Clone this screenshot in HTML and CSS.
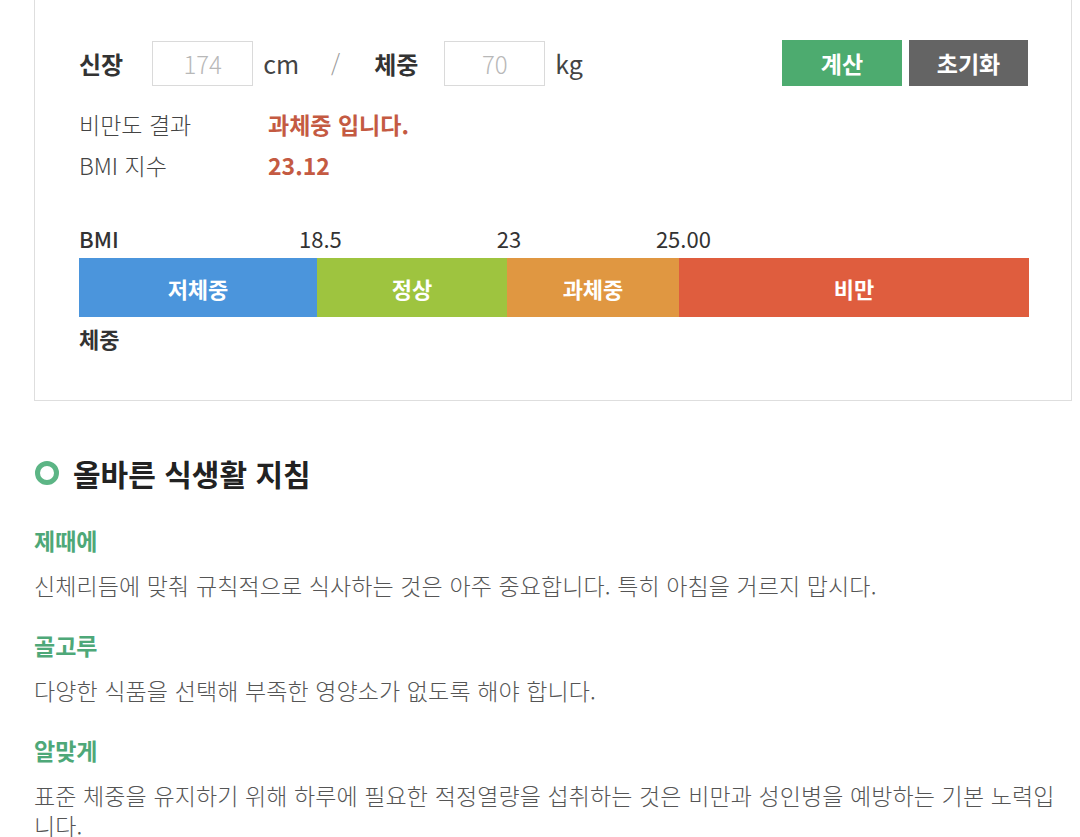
FILE: index.html
```html
<!doctype html>
<html lang="ko">

<head>
  <meta charset="utf-8">
  <title>BMI 계산기</title>
  <link rel="stylesheet" href="styles.css">
</head>

<body>

  <div id="page">
    <div class="calc">

      <div class="calc-form">
        <label class="field">
          <span class="field__name">신장</span>
          <input class="field__input" type="text" value="174">
          <span class="field__unit">cm</span>
        </label>
        <span class="slash">/</span>
        <label class="field">
          <span class="field__name field__name--weight">체중</span>
          <input class="field__input" type="text" value="70">
          <span class="field__unit">kg</span>
        </label>
        <div class="buttons">
          <button class="btn btn-calc" type="button">계산</button>
          <button class="btn btn-reset" type="button">초기화</button>
        </div>
      </div>

      <dl class="result">
        <dt>비만도 결과</dt>
        <dd>과체중 입니다.</dd>
        <dt>BMI 지수</dt>
        <dd>23.12</dd>
      </dl>

      <div class="scale">
        <div class="scale__marks">
          <div class="scale__col scale__col--low"><span class="scale__name">BMI</span></div>
          <div class="scale__col scale__col--normal"><span class="scale__mark">18.5</span></div>
          <div class="scale__col scale__col--over"><span class="scale__mark">23</span></div>
          <div class="scale__col scale__col--obese"><span class="scale__mark">25.00</span></div>
        </div>
        <div class="scale__bar">
          <div class="scale__col scale__col--low">저체중</div>
          <div class="scale__col scale__col--normal">정상</div>
          <div class="scale__col scale__col--over">과체중</div>
          <div class="scale__col scale__col--obese">비만</div>
        </div>
        <div class="scale__weight">체중</div>
      </div>

    </div>

    <div class="guide">
      <h2 class="guide__title">
        <svg class="guide__icon" xmlns="http://www.w3.org/2000/svg" width="24" height="24" viewBox="0 0 24 24">
          <circle cx="12" cy="12" r="9.5" fill="none" stroke="#5cb585" stroke-width="5"/>
        </svg>
        올바른 식생활 지침
      </h2>

      <h3 class="guide__head">제때에</h3>
      <p class="guide__text">신체리듬에 맞춰 규칙적으로 식사하는 것은 아주 중요합니다. 특히 아침을 거르지 맙시다.</p>

      <h3 class="guide__head">골고루</h3>
      <p class="guide__text">다양한 식품을 선택해 부족한 영양소가 없도록 해야 합니다.</p>

      <h3 class="guide__head">알맞게</h3>
      <p class="guide__text">표준 체중을 유지하기 위해 하루에 필요한 적정열량을 섭취하는 것은 비만과 성인병을 예방하는 기본 노력입니다.</p>
    </div>
  </div>

</body>

</html>
```

FILE: styles.css
```css
* {
  margin: 0;
  padding: 0;
  box-sizing: border-box;
}

body {
  font-family: "Noto Sans CJK KR", "Noto Sans", sans-serif;
  color: #444;
  background: #fff;
  overflow: hidden;
}

#page {
  width: 1080px;
  padding: 0 8px 0 34px;
}

/* calculator box */

.calc {
  border: 1px solid #dedede;
  border-top: 0;
  padding: 40px 43px 50px 44px;
}

.calc-form {
  display: flex;
  align-items: center;
  height: 46px;
}

.field {
  display: flex;
  align-items: center;
}

.field__name {
  font-size: 24px;
  font-weight: 700;
  color: #333;
  margin-right: 29px;
}

.field__name--weight {
  margin-right: 26px;
}

.field__input {
  width: 101px;
  height: 45px;
  border: 1px solid #dadada;
  font-family: inherit;
  font-size: 24px;
  font-weight: 300;
  color: #b8b8b8;
  text-align: center;
  outline: none;
}

.field__unit {
  font-size: 25px;
  font-weight: 400;
  color: #444;
  margin-left: 10px;
}

.slash {
  font-size: 23px;
  font-weight: 300;
  color: #999;
  margin: 0 34px 0 32px;
}

.buttons {
  margin-left: auto;
  display: flex;
  gap: 7px;
}

.btn {
  width: 120px;
  height: 46px;
  border: 0;
  font-family: inherit;
  font-size: 23px;
  font-weight: 700;
  color: #fff;
  cursor: pointer;
}

.btn-calc {
  background: #4dab6f;
}

.btn-reset {
  width: 119px;
  background: #646464;
}

.result {
  display: grid;
  grid-template-columns: 189px auto;
  margin-top: 18px;
  font-size: 23px;
  line-height: 41px;
}

.result dt {
  font-weight: 300;
  color: #444;
}

.result dd {
  font-weight: 700;
  color: #c45a42;
}

/* bmi scale */

.scale {
  margin-top: 40px;
}

.scale__marks,
.scale__bar {
  display: flex;
  width: 950px;
}

.scale__col--low {
  width: 238px;
}

.scale__col--normal {
  width: 190px;
}

.scale__col--over {
  width: 172px;
}

.scale__col--obese {
  flex: 1;
}

.scale__marks {
  font-size: 22px;
  line-height: 24px;
  color: #333;
}

.scale__name {
  font-weight: 500;
}

.scale__mark {
  display: inline-block;
  transform: translateX(-42%);
}

.scale__bar {
  margin-top: 8px;
  height: 59px;
}

.scale__bar .scale__col {
  display: flex;
  align-items: center;
  justify-content: center;
  font-size: 22px;
  font-weight: 700;
  color: #fff;
}

.scale__bar .scale__col--low {
  background: #4b95dc;
}

.scale__bar .scale__col--normal {
  background: #9ec43f;
}

.scale__bar .scale__col--over {
  background: #e09741;
}

.scale__bar .scale__col--obese {
  background: #df5d3e;
}

.scale__weight {
  margin-top: 9px;
  font-size: 22px;
  font-weight: 700;
  line-height: 24px;
  color: #333;
}

/* guide */

.guide {
  padding-top: 52px;
}

.guide__title {
  display: flex;
  align-items: center;
  gap: 14px;
  font-size: 30px;
  font-weight: 700;
  line-height: 40px;
  color: #222;
}

.guide__icon {
  flex: none;
  margin-left: 1px;
}

.guide__head {
  margin-top: 32px;
  font-size: 23px;
  font-weight: 700;
  line-height: 30px;
  color: #4ea878;
}

.guide__text {
  margin-top: 15px;
  font-size: 23px;
  font-weight: 300;
  line-height: 30px;
  color: #555;
  letter-spacing: 0.1px;
}

.guide__text + .guide__head {
  margin-top: 30px;
}
```
